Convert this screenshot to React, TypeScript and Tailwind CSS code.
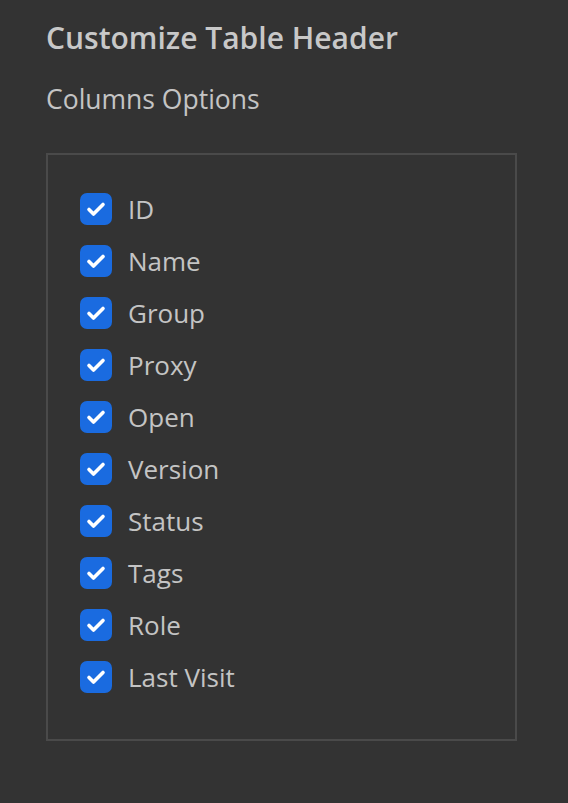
const columns = ["ID", "Name", "Group", "Proxy", "Open", "Version", "Status", "Tags", "Role", "Last Visit"]

function CheckIcon() {
  return (
    <svg viewBox="0 0 32 32" className="h-8 w-8 shrink-0">
      <rect x="0" y="0" width="32" height="32" rx="7" fill="#1a6be0" />
      <path d="M9 16.5l4.5 4.5 9.5-9.5" fill="none" stroke="#ffffff" strokeWidth="3.6" strokeLinecap="round" strokeLinejoin="round" />
    </svg>
  )
}

export default function App() {
  return (
    <div className="min-h-[803px] bg-[#333333] px-[46px] pt-[18px] text-[#c4c4c4]" style={{ fontFamily: '"Open Sans", "Noto Sans", sans-serif' }}>
      <h1 className="text-[30px] font-semibold leading-[40px] text-[#c8c8c8]">Customize Table Header</h1>
      <p className="mt-[21px] text-[26.5px] leading-[40px]">Columns Options</p>

      <div className="mt-[34px] w-[471px] border-2 border-[#4a4a4a] px-[32px] pb-[36px] pt-[28px]">
        <div className="flex flex-col">
          {columns.map((col) => (
            <label key={col} className="flex h-[52px] items-center gap-4">
              <CheckIcon />
              <span className="text-[26px] leading-none">{col}</span>
            </label>
          ))}
        </div>
      </div>
    </div>
  )
}
